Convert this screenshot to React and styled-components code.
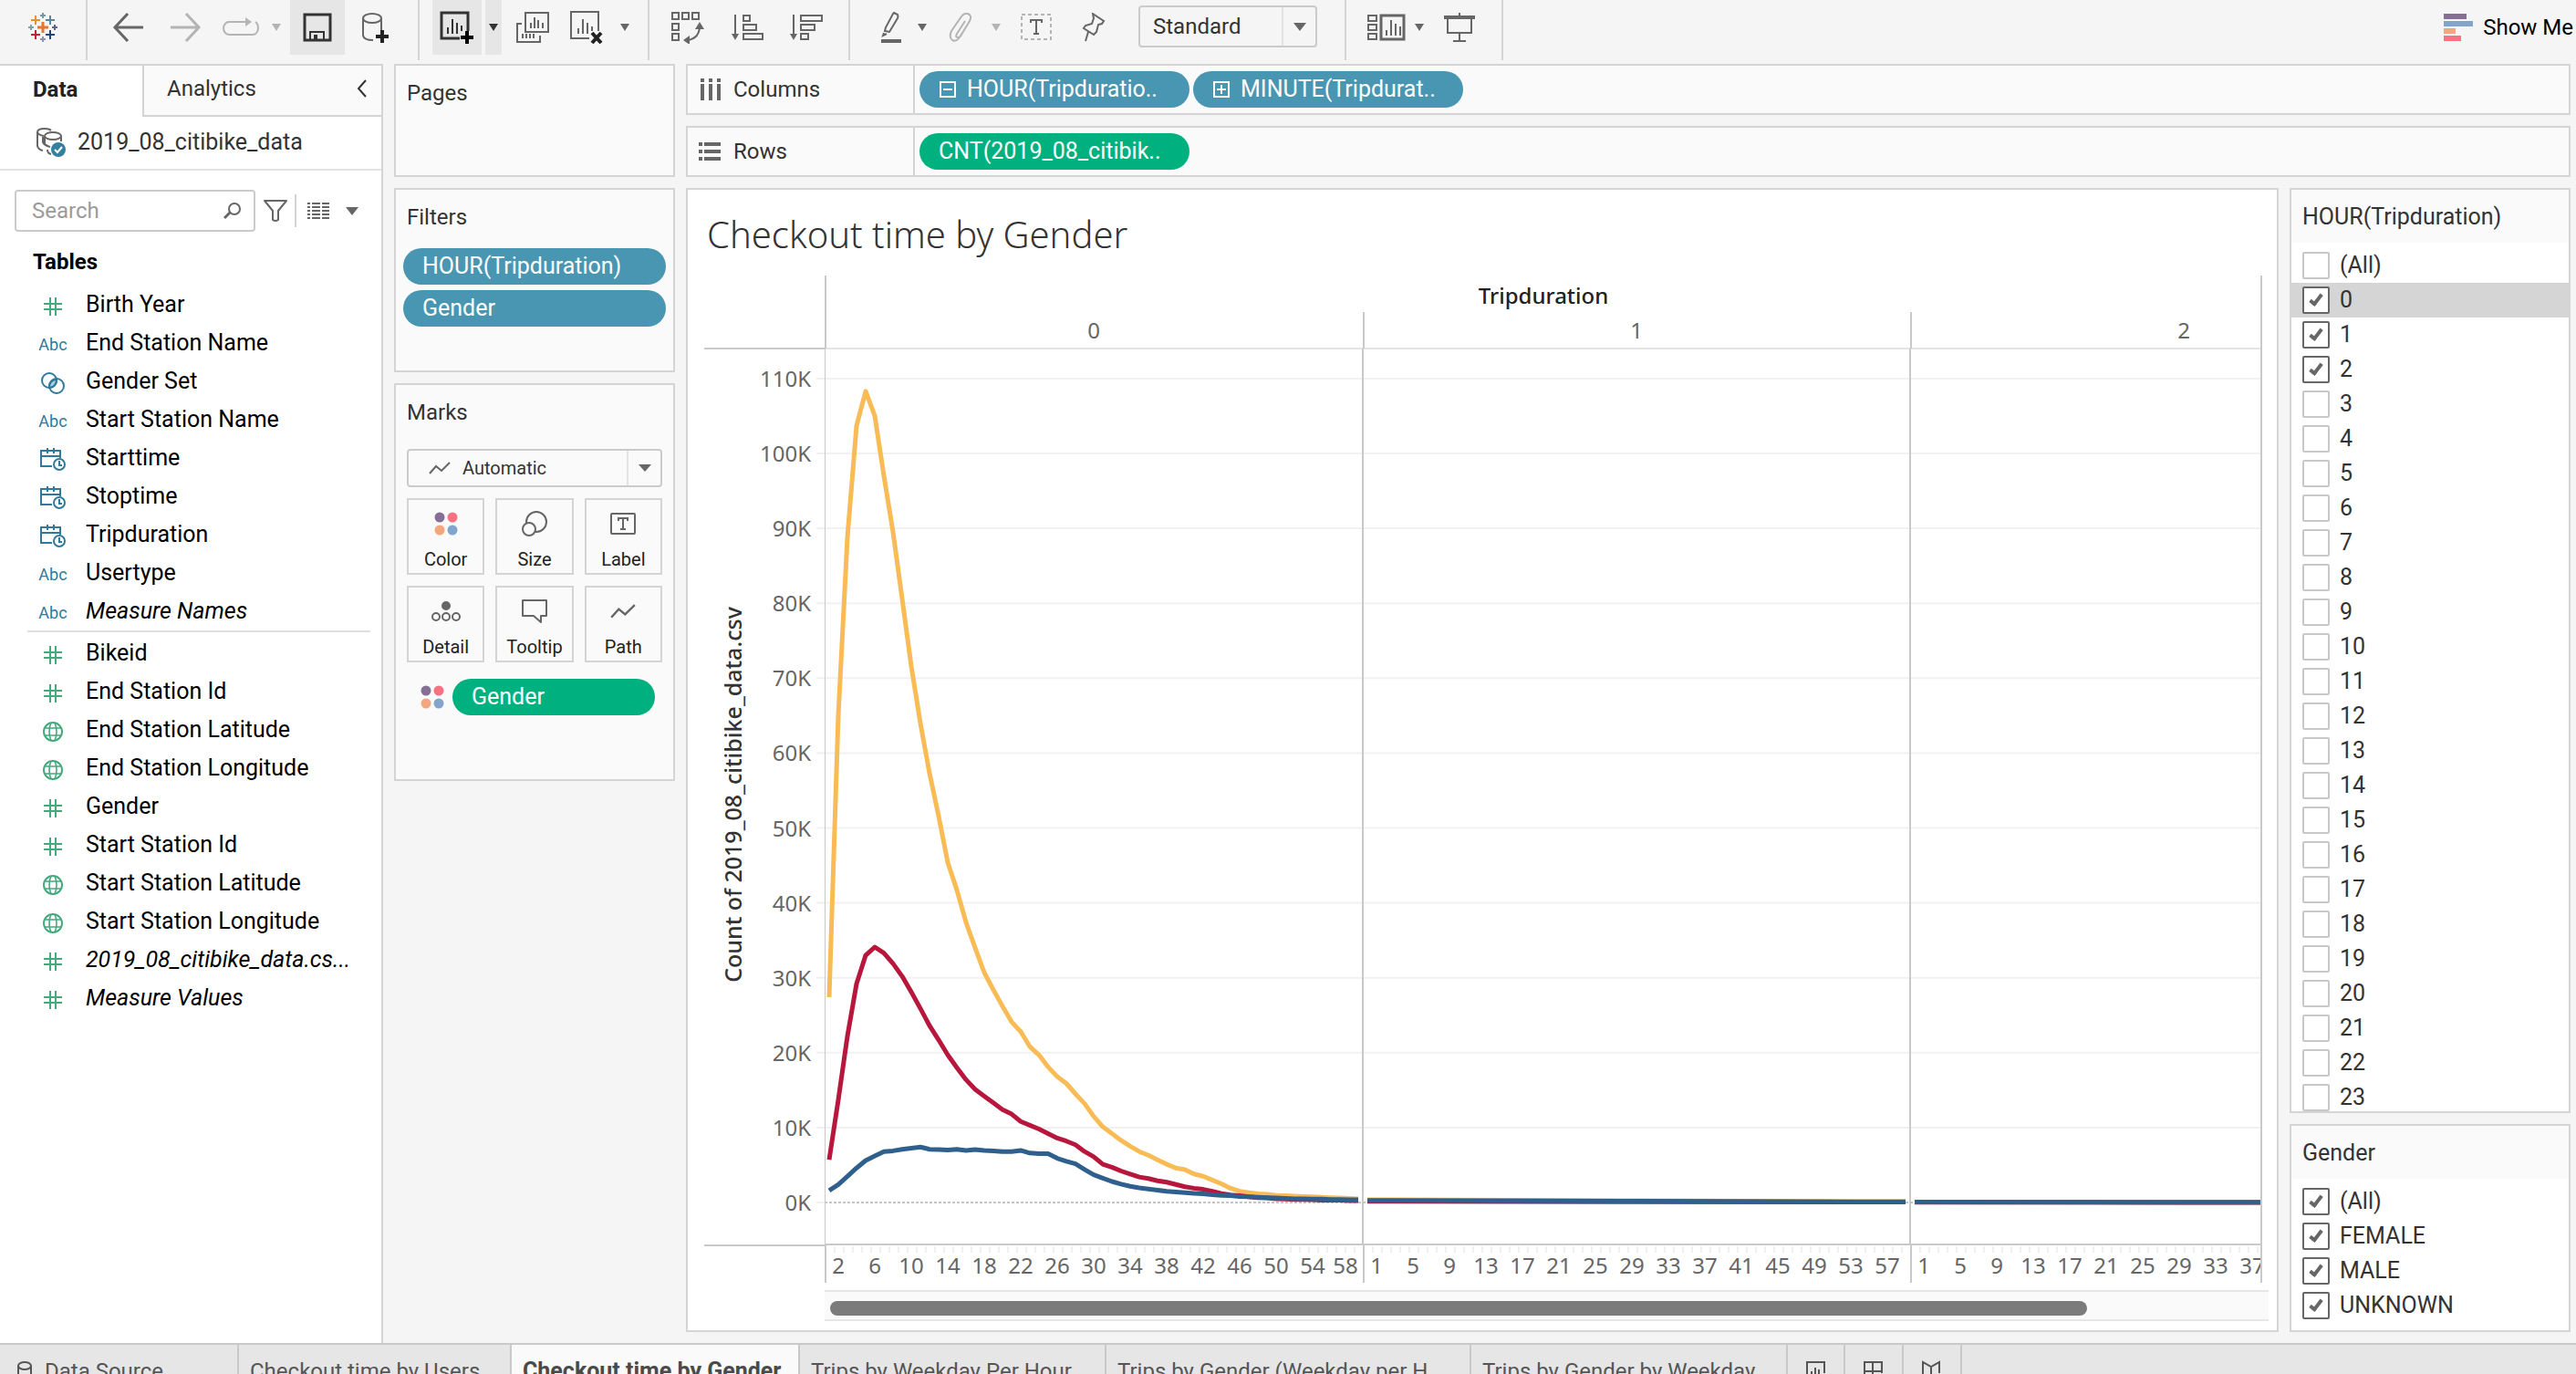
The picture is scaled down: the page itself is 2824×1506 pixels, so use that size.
import React, { useState } from "react";
import styled, { createGlobalStyle, css } from "styled-components";

const UI = `Roboto, "Liberation Sans", sans-serif`;
const CHART = `"Noto Sans", "Open Sans", sans-serif`;
const LINE = "#d4d4d4";
const INK = "#333333";
const GREY = "#666666";
const FAINT = "#b4b4b4";
const BLUE = "#4996b2";
const GREEN = "#00b180";

const GlobalStyle = createGlobalStyle`
  *, *::before, *::after { box-sizing: border-box; }
  body { margin: 0; background: #f5f5f5; }
  button, input, select { font: inherit; color: inherit; }
  button { padding: 0; border: 0; background: none; cursor: pointer; }
  svg { display: block; flex: none; }
`;

const Window = styled.div`
  display: flex;
  flex-direction: column;
  height: 100vh;
  overflow: hidden;
  background: #f5f5f5;
  color: ${INK};
  font: 24px/32px ${UI};
`;

/* ---------- Toolbar ---------- */

const Toolbar = styled.header`
  display: flex;
  flex: none;
  height: 70px;
  padding-bottom: 4px;
`;

const ToolGroup = styled.div`
  display: flex;
  flex: none;
  align-items: flex-start;
  padding: 0 ${(p) => p.$right || 0}px 0 ${(p) => p.$left || 0}px;
  border-right: 2px solid ${LINE};
`;

const ToolButton = styled.button`
  display: flex;
  align-items: center;
  justify-content: center;
  width: ${(p) => p.$w}px;
  height: 60px;
  background: ${(p) => (p.$on ? "#e6e6e6" : "transparent")};
  color: ${(p) => (p.$tone === "dark" ? INK : p.$tone === "faint" ? FAINT : GREY)};
`;

const SplitGap = styled.span`
  width: 4px;
`;

const SelectBox = styled.div`
  display: flex;
  align-items: stretch;
  width: ${(p) => p.$w || "auto"};
  height: ${(p) => p.$h}px;
  margin: ${(p) => p.$m || "0"};
  border: 2px solid #cbcbcb;
  border-radius: 4px;
  font-size: ${(p) => p.$size || 24}px;
  color: ${INK};
`;

const NativeSelect = styled.select`
  flex: 1;
  min-width: 0;
  padding: 0 0 0 ${(p) => p.$pad}px;
  border: 0;
  appearance: none;
  background: transparent;
  outline: none;
`;

const SelectIcon = styled.span`
  display: flex;
  align-items: center;
  padding-left: 22px;
  color: ${GREY};
`;

const SelectArrow = styled.span`
  display: flex;
  align-items: center;
  justify-content: center;
  width: 37px;
  border-left: 2px solid #e2e2e2;
  color: ${GREY};
`;

const ShowMe = styled.button`
  display: flex;
  align-items: center;
  gap: 11px;
  height: 60px;
  margin-left: auto;
  padding-right: 3px;
  color: #000;
  white-space: nowrap;
`;

/* ---------- Workspace ---------- */

const Workspace = styled.main`
  display: flex;
  flex: 1;
  min-height: 0;
`;

const DataPane = styled.aside`
  display: flex;
  flex: none;
  flex-direction: column;
  width: 420px;
  border-top: 2px solid ${LINE};
  border-right: 2px solid ${LINE};
  background: #fff;
`;

const PaneTabs = styled.div`
  display: flex;
  height: 56px;
`;

const PaneTab = styled.button`
  width: ${(p) => (p.$active ? "156px" : "auto")};
  flex: ${(p) => (p.$active ? "none" : 1)};
  display: flex;
  align-items: center;
  justify-content: space-between;
  padding: 0 15px 4px ${(p) => (p.$active ? 36 : 25)}px;
  font-weight: ${(p) => (p.$active ? 700 : 400)};
  color: ${(p) => (p.$active ? "#222" : INK)};
  ${(p) =>
    !p.$active &&
    css`
      background: #fafafa;
      border-left: 2px solid ${LINE};
      border-bottom: 2px solid ${LINE};
    `}
`;

const SourceRow = styled.button`
  display: flex;
  align-items: center;
  gap: 13px;
  height: 59px;
  padding: 0 0 2px 40px;
  border-bottom: 2px solid #e2e2e2;
  font-size: 25px;
  svg {
    color: ${GREY};
  }
`;

const SearchRow = styled.div`
  display: flex;
  align-items: center;
  margin: 21px 0 0 16px;
  color: ${GREY};
`;

const SearchField = styled.label`
  display: flex;
  align-items: center;
  width: 264px;
  height: 46px;
  padding: 0 13px 0 17px;
  border: 2px solid #cbcbcb;
  border-radius: 4px;
`;

const SearchInput = styled.input`
  flex: 1;
  min-width: 0;
  padding: 0;
  border: 0;
  outline: none;
  background: transparent;
  &::placeholder {
    color: #9b9b9b;
    opacity: 1;
  }
`;

const PlainIcon = styled.button`
  display: flex;
  align-items: center;
  justify-content: center;
  width: ${(p) => p.$w}px;
  height: 36px;
  color: ${GREY};
  border-left: ${(p) => (p.$rule ? `2px solid ${LINE}` : "0")};
`;

const TablesTitle = styled.h2`
  margin: 17px 0 10px 36px;
  font-size: 24px;
  font-weight: 700;
  line-height: 32px;
  color: #000;
`;

const FieldList = styled.ul`
  margin: 0;
  padding: 0;
  list-style: none;
  & + & {
    margin: 0 12px 0 30px;
    padding-top: 2px;
    border-top: 2px solid #dedede;
  }
  & + & > li {
    padding-left: 6px;
  }
`;

const Field = styled.li`
  display: flex;
  align-items: center;
  height: 42px;
  padding-left: 36px;
  font-size: 25px;
  font-style: ${(p) => (p.$calc ? "italic" : "normal")};
  color: #000;
  white-space: nowrap;
`;

const FieldIcon = styled.span`
  display: flex;
  justify-content: center;
  width: 44px;
  margin-right: 14px;
  padding-top: 3px;
  font-size: 18px;
  font-style: normal;
  line-height: 24px;
  color: #2f7a9c;
`;

/* ---------- Cards ---------- */

const CardColumn = styled.section`
  display: flex;
  flex: none;
  flex-direction: column;
  gap: 12px;
  width: 308px;
  margin: 0 12px;
`;

const Card = styled.div`
  min-height: ${(p) => p.$min}px;
  padding-bottom: 44px;
  border: 2px solid ${LINE};
  background: #fafafa;
`;

const CardTitle = styled.h3`
  margin: 0;
  padding: 14px 0 18px 12px;
  font-size: 24px;
  font-weight: 400;
  line-height: 32px;
`;

const PillStack = styled.div`
  display: flex;
  flex-direction: column;
  gap: 6px;
  padding: 0 8px;
`;

const Pill = styled.button`
  display: flex;
  flex: ${(p) => (p.$w ? "none" : 1)};
  align-items: center;
  gap: 11px;
  width: ${(p) => (p.$w ? `${p.$w}px` : "auto")};
  min-height: 40px;
  padding-left: 21px;
  border-radius: 20px;
  background: ${(p) => (p.$green ? GREEN : BLUE)};
  color: #fff;
  font-size: 25px;
  line-height: 32px;
  text-align: left;
  white-space: nowrap;
`;

const MarkGrid = styled.div`
  display: grid;
  grid-template-columns: repeat(3, 1fr);
  gap: 12px;
  padding: 12px;
`;

const MarkButton = styled.button`
  display: flex;
  flex-direction: column;
  align-items: center;
  justify-content: space-between;
  height: 84px;
  padding: 8px 0 3px;
  border: 2px solid ${LINE};
  font-size: 20px;
  line-height: 24px;
  color: #222;
`;

const MarkGlyph = styled.span`
  display: flex;
  align-items: center;
  height: 36px;
  color: ${GREY};
`;

const MarkRow = styled.div`
  display: flex;
  align-items: center;
  gap: 9px;
  padding: 6px 20px 0 27px;
`;

/* ---------- Shelves ---------- */

const Sheet = styled.section`
  display: flex;
  flex: 1;
  flex-direction: column;
  gap: 12px;
  min-width: 0;
  margin: 0 6px 12px 0;
`;

const Shelf = styled.div`
  display: flex;
  flex: none;
  height: 56px;
  border: 2px solid ${LINE};
  background: #fafafa;
`;

const ShelfName = styled.div`
  display: flex;
  align-items: center;
  gap: 14px;
  width: 249px;
  padding-left: ${(p) => p.$pad}px;
  border-right: 2px solid ${LINE};
  svg {
    color: ${GREY};
  }
`;

const ShelfPills = styled.div`
  display: flex;
  align-items: center;
  gap: 4px;
  padding-left: 5px;
`;

const ViewRow = styled.div`
  display: flex;
  flex: 1;
  gap: 12px;
  min-height: 0;
`;

/* ---------- Viz ---------- */

const View = styled.article`
  display: flex;
  flex: 1;
  flex-direction: column;
  min-width: 0;
  padding: 0 9px 0 18px;
  border: 2px solid ${LINE};
  background: #fff;
  overflow: hidden;
`;

const ViewTitle = styled.h1`
  margin: 0;
  padding: 21px 0 17px 3px;
  font: 300 40px/56px ${CHART};
  color: ${INK};
`;

const Chart = styled.div`
  display: flex;
  padding-right: 7px;
`;

const ChartSvg = styled.svg`
  width: ${(p) => p.$w || "auto"};
  flex: ${(p) => (p.$w ? "none" : "1 1 0")};
  min-width: 0;
  height: 1104px;
  font-family: ${CHART};
  font-size: 24px;
  overflow: hidden;
`;

const ScrollTrack = styled.div`
  display: flex;
  align-items: flex-end;
  height: 34px;
  margin: 8px 0 0 132px;
  padding: 0 6px 4px;
  border-top: 2px solid #e6e6e6;
  border-bottom: 2px solid #e6e6e6;
  background: #fafafa;
`;

const ScrollThumb = styled.div`
  width: ${(p) => p.$share}%;
  height: 16px;
  border-radius: 8px;
  background: #7b7b7b;
`;

/* ---------- Filter cards ---------- */

const FilterColumn = styled.div`
  display: flex;
  flex: none;
  flex-direction: column;
  gap: 12px;
  width: 308px;
`;

const FilterCard = styled.fieldset`
  flex: ${(p) => (p.$fill ? "1 1 0" : "none")};
  min-height: 0;
  min-width: 0;
  margin: 0;
  padding: 0 0 ${(p) => (p.$fill ? 0 : 8)}px;
  border: 2px solid ${LINE};
  background: #fff;
  font-size: 25px;
  overflow: hidden;
`;

const FilterTitle = styled.div`
  height: 58px;
  margin-bottom: 6px;
  padding: 14px 0 0 12px;
  background: #fafafa;
  line-height: 32px;
`;

const FilterItem = styled.label`
  display: flex;
  align-items: center;
  gap: 11px;
  height: 38px;
  padding-left: 12px;
  background: ${(p) => (p.$selected ? "#d5d5d5" : "transparent")};
`;

const Tick = styled.input`
  appearance: none;
  width: 30px;
  height: 30px;
  margin: 0;
  border: 2px solid #c8c8c8;
  border-radius: 2px;
  background: #fff;
  display: grid;
  place-items: center;
  &:checked {
    border-color: ${GREY};
  }
  &:checked::after {
    content: "";
    width: 8px;
    height: 15px;
    margin-bottom: 4px;
    border: solid ${GREY};
    border-width: 0 4px 4px 0;
    transform: rotate(38deg);
  }
`;

/* ---------- Sheet tabs ---------- */

const TabStrip = styled.nav`
  display: flex;
  flex: none;
  align-items: flex-start;
  height: 34px;
  border-top: 2px solid #c9c9c9;
  background: #e6e6e6;
  overflow: hidden;
`;

const SheetTab = styled.button`
  display: flex;
  flex: none;
  align-items: center;
  justify-content: ${(p) => (p.$icon ? "center" : "flex-start")};
  gap: 14px;
  width: ${(p) => p.$w}px;
  height: 58px;
  padding-left: ${(p) => (p.$icon ? 0 : p.$first ? 19 : 12)}px;
  border-right: 2px solid #c9c9c9;
  background: ${(p) => (p.$active ? "#fafafa" : "transparent")};
  font-size: ${(p) => (p.$active ? 25 : 24)}px;
  font-weight: ${(p) => (p.$active ? 700 : 400)};
  color: ${(p) => (p.$active ? "#4a4a4a" : "#555")};
  white-space: nowrap;
`;

/* ---------- Icons ---------- */

const Svg = ({ w, h, sw = 2, children }) => (
  <svg width={w} height={h} viewBox={`0 0 ${w} ${h}`} fill="none" stroke="currentColor" strokeWidth={sw} aria-hidden="true">
    {children}
  </svg>
);

const Caret = ({ w = 12, h = 8 }) => (
  <svg width={w} height={h} viewBox="0 0 12 8" preserveAspectRatio="none" fill="currentColor" aria-hidden="true">
    <path d="M0 0H12L6 8Z" />
  </svg>
);

const LogoIcon = () => {
  const crosses = [
    [16, 16, 6, 3, "#e8762c"],
    [8, 8, 5, 2, "#eb912c"],
    [24, 8, 5, 2, "#59879b"],
    [8, 24, 5, 2, "#c72035"],
    [24, 24, 5, 2, "#1f447e"],
    [16, 3, 3, 2, "#7199a6"],
    [16, 29, 3, 2, "#8b93b5"],
    [3, 16, 3, 2, "#7ba3a9"],
    [29, 16, 3, 2, "#5b6591"],
  ];
  return (
    <Svg w={32} h={32}>
      {crosses.map(([x, y, r, s, c]) => (
        <path key={`${x}-${y}`} d={`M${x - r} ${y}H${x + r}M${x} ${y - r}V${y + r}`} stroke={c} strokeWidth={s} />
      ))}
    </Svg>
  );
};

const BackIcon = () => (
  <Svg w={34} h={32} sw={3}><path d="M17 1L3 16L17 31M2 16H34" /></Svg>
);
const ForwardIcon = () => (
  <Svg w={34} h={32} sw={3}><path d="M17 1L31 16L17 31M32 16H0" /></Svg>
);
const LoopIcon = () => (
  <Svg w={42} h={24}>
    <path d="M27 6H8A6 7 0 0 0 2 13A6 7 0 0 0 8 20H33A6 7 0 0 0 40 13Q40 8 37 6" />
    <path d="M26 1L33 6L26 11Z" fill="currentColor" stroke="none" />
  </Svg>
);
const SaveIcon = () => (
  <Svg w={32} h={32}>
    <path d="M2 2H30V30H2Z" strokeWidth="3" /><path d="M8 30V21H23V30" /><path d="M14 24V30" strokeWidth="4" />
  </Svg>
);
const DbPlusIcon = () => (
  <Svg w={30} h={34}>
    <ellipse cx="11" cy="7" rx="10" ry="5" /><path d="M1 7V26Q2 31 12 31M21 7V20" />
    <path d="M22 20V34M15 27H29" stroke="#222" strokeWidth="4" />
  </Svg>
);
const NewSheetIcon = () => (
  <Svg w={38} h={36} sw={3}>
    <path d="M22 30H2V2H31V22" /><path d="M9 25V18M14 25V9M19 25V13M24 22V16" strokeWidth="2" />
    <path d="M30 22V36M23 29H37" stroke="#000" strokeWidth="4" />
  </Svg>
);
const DuplicateIcon = () => (
  <Svg w={36} h={34}>
    <path d="M10 1H35V22H10Z M6 13H1V33H26V26" /><path d="M16 18V12M20 18V6M24 18V9M29 18V12M7 29V24M11 29V24M15 29V24M19 29V24" />
  </Svg>
);
const ClearIcon = () => (
  <Svg w={38} h={36}>
    <path d="M21 30H1V1H31V22" /><path d="M9 25V19M14 25V9M19 25V13M24 22V17" />
    <path d="M24 24L34 35M34 24L24 35" stroke="#222" strokeWidth="4" />
  </Svg>
);
const SwapIcon = () => (
  <Svg w={36} h={36}>
    <path d="M1 2H8V9H1ZM12 2H19V9H12ZM23 2H30V9H23ZM1 14H8V21H1ZM1 25H8V32H1Z" />
    <path d="M31 16Q31 30 18 32" />
    <path d="M31 12L36 20H26ZM13 32L20 27V37Z" fill="currentColor" stroke="none" />
  </Svg>
);
const SortAscIcon = () => (
  <Svg w={36} h={30}>
    <path d="M4 1V26M13 2H20V8H13ZM13 12H27V18H13ZM13 22H34V28H13Z" />
    <path d="M0 22H8L4 29Z" fill="currentColor" stroke="none" />
  </Svg>
);
const SortDescIcon = () => (
  <Svg w={36} h={30}>
    <path d="M4 1V26M12 2H35V8H12ZM12 12H27V18H12ZM12 22H20V28H12Z" />
    <path d="M0 22H8L4 29Z" fill="currentColor" stroke="none" />
  </Svg>
);
const PenIcon = () => (
  <Svg w={24} h={36}>
    <path d="M14 2L18 4Q19 6 18 8L9 23L4 22L5 18L13 3Z" transform="translate(1 0)" />
    <path d="M4 24L3 27L7 25" /><path d="M1 33H23" strokeWidth="4" />
  </Svg>
);
const ClipIcon = () => (
  <Svg w={26} h={32}>
    <path d="M18 9L9 23Q7 27 10 27Q12 28 14 24L23 9Q26 3 21 1Q17 0 14 4L3 20Q0 27 4 30Q8 32 11 28L17 19" />
  </Svg>
);
const TextBoxIcon = () => (
  <Svg w={36} h={32}>
    <rect x="2" y="2" width="32" height="27" strokeDasharray="4 3" stroke={FAINT} />
    <path d="M12 11V8H24V11M18 8V23M15 23H21" stroke={GREY} />
  </Svg>
);
const PinIcon = () => (
  <Svg w={26} h={32}>
    <path d="M12 1L24 9L22 12L18 13L16 21L13 24L2 17L4 14L11 12L13 6ZM7 21L4 31" />
  </Svg>
);
const CardsIcon = () => (
  <Svg w={42} h={30}>
    <path d="M1 2H10V8H1ZM1 12H10V18H1ZM1 22H10V28H1Z" /><path d="M15 2H40V28H15Z" strokeWidth="3" />
    <path d="M21 24V18M26 24V7M31 24V11M36 24V14" />
  </Svg>
);
const PresentIcon = () => (
  <Svg w={36} h={34}>
    <path d="M1 6H35" strokeWidth="4" /><path d="M5 6V23H31V6M18 1V4M18 23V32M11 32H25" />
  </Svg>
);
const ShowMeIcon = () => (
  <svg width="32" height="30" aria-hidden="true">
    <path d="M0 0H25V6H0Z" fill="#866f97" /><path d="M0 8H32V14H0Z" fill="#83a5cb" />
    <path d="M0 16H13V22H0Z" fill="#f4a77c" /><path d="M0 24H19V30H0Z" fill="#fb7181" />
  </svg>
);
const ChevronIcon = () => (
  <Svg w={12} h={20}><path d="M10 1L2 10L10 19" /></Svg>
);
const SourceIcon = () => (
  <Svg w={32} h={32}>
    <path d="M1 5Q1 1 9 1Q14 1 16 3M1 5V20Q2 24 7 25M1 5Q2 8 8 9M7 10V16Q8 19 13 20" />
    <ellipse cx="18" cy="9" rx="9" ry="4" /><path d="M9 9V17M27 9V15M9 17Q10 20 15 21M12 24Q12 28 16 29" />
    <circle cx="24" cy="24" r="8" fill="#33809f" stroke="none" /><path d="M20 24L23 27L28 21" stroke="#fff" />
  </Svg>
);
const SearchIcon = () => (
  <Svg w={20} h={20}><circle cx="12" cy="8" r="6" /><path d="M7 12L1 18" strokeWidth="3" /></Svg>
);
const FunnelIcon = () => (
  <Svg w={26} h={26}><path d="M1 2H25L16 13V23Q13 25 10 23V13Z" strokeLinejoin="round" /></Svg>
);
const ListIcon = () => (
  <Svg w={24} h={20}>
    {[1, 5, 9, 13, 17].map((y) => (
      <path key={y} d={`M0 ${y + 1}H3M5 ${y + 1}H14M16 ${y + 1}H24`} />
    ))}
  </Svg>
);
const HashIcon = () => (
  <Svg w={20} h={20}><path d="M7 0V20M13 0V20M0 7H20M0 13H20" stroke="#45a97e" /></Svg>
);
const GlobeIcon = () => (
  <Svg w={22} h={22}>
    <g stroke="#45a97e">
      <circle cx="11" cy="11" r="10" /><path d="M9 1Q5 11 9 21M13 1Q17 11 13 21M2 7H20M2 15H20" strokeWidth="1.6" />
    </g>
  </Svg>
);
const SetIcon = () => (
  <Svg w={26} h={24}>
    <circle cx="9" cy="9" r="8" /><circle cx="17" cy="15" r="8" />
    <path d="M17 8A8 8 0 0 1 9 17A8 8 0 0 1 17 8Z" fill="#2f7a9c" fillOpacity="0.4" />
  </Svg>
);
const DateTimeIcon = () => (
  <Svg w={28} h={26}>
    <path d="M13 20H1V3H22V11M1 9H22M8 0V6M15 0V6" /><circle cx="21" cy="18" r="6" /><path d="M21 14V19H24" />
  </Svg>
);
const ColumnsIcon = () => (
  <Svg w={22} h={24}>
    <path d="M2 0V24M11 0V24M20 0V24" strokeWidth="4" strokeDasharray="4 2 18" />
  </Svg>
);
const RowsIcon = () => (
  <Svg w={24} h={20}>
    <path d="M0 2H24M0 10H24M0 18H24" strokeWidth="4" strokeDasharray="4 2 18" />
  </Svg>
);
const ExpandIcon = ({ plus }) => (
  <Svg w={20} h={20}>
    <path d="M2 2H18V18H2Z" /><path d={plus ? "M5 10H15M10 5V15" : "M5 10H15"} />
  </Svg>
);
const LineIcon = ({ w = 24, h = 14 }) => (
  <svg width={w} height={h} viewBox="0 0 24 14" preserveAspectRatio="none" fill="none" stroke="currentColor" strokeWidth="2" aria-hidden="true">
    <path d="M1 13L8 5L14 10L23 1" />
  </svg>
);
const ColorIcon = () => (
  <svg width="26" height="26" aria-hidden="true">
    <circle cx="6" cy="6" r="5.5" fill="#866f97" /><circle cx="20" cy="6" r="5.5" fill="#fb7181" />
    <circle cx="6" cy="20" r="5.5" fill="#f4a77c" /><circle cx="20" cy="20" r="5.5" fill="#83a5cb" />
  </svg>
);
const SizeIcon = () => (
  <Svg w={28} h={28}><circle cx="16" cy="12" r="11" /><circle cx="8" cy="20" r="7" fill="#fafafa" /></Svg>
);
const LabelIcon = () => (
  <Svg w={28} h={24}><rect x="1" y="1" width="26" height="22" rx="1" /><path d="M9 9V6H19V9M14 6V18M11 18H17" /></Svg>
);
const DetailIcon = () => (
  <Svg w={32} h={22}>
    <circle cx="16" cy="5" r="4" fill="currentColor" /><circle cx="5" cy="17" r="4" /><circle cx="16" cy="17" r="4" /><circle cx="27" cy="17" r="4" />
  </Svg>
);
const TooltipIcon = () => (
  <Svg w={28} h={26}><path d="M1 1H27V18H21V25L13 18H1Z" strokeLinejoin="round" /></Svg>
);
const TabSourceIcon = () => (
  <Svg w={16} h={24}><ellipse cx="8" cy="6" rx="7" ry="4" /><path d="M1 6V20Q8 25 15 20V6" /></Svg>
);
const TabSheetIcon = () => (
  <Svg w={24} h={24}><path d="M15 23H2V2H21V14M7 18V12M11 18V8M15 18V10M20 15V24M15 20H24" /></Svg>
);
const TabDashIcon = () => (
  <Svg w={24} h={24}><path d="M14 22H2V2H21V14M2 12H21M11 2V22M20 15V24M15 20H24" /></Svg>
);
const TabStoryIcon = () => (
  <Svg w={24} h={24}><path d="M14 22H2V2L11 7L20 2V14M11 7V22M20 15V24M15 20H24" /></Svg>
);

/* ---------- Data ---------- */

const DIMENSIONS = [
  ["Birth Year", "hash"], ["End Station Name", "abc"], ["Gender Set", "set"], ["Start Station Name", "abc"],
  ["Starttime", "date"], ["Stoptime", "date"], ["Tripduration", "date"], ["Usertype", "abc"],
  ["Measure Names", "abc", true],
];
const MEASURES = [
  ["Bikeid", "hash"], ["End Station Id", "hash"], ["End Station Latitude", "globe"], ["End Station Longitude", "globe"],
  ["Gender", "hash"], ["Start Station Id", "hash"], ["Start Station Latitude", "globe"], ["Start Station Longitude", "globe"],
  ["2019_08_citibike_data.cs...", "hash", true], ["Measure Values", "hash", true],
];
const FIELD_ICONS = { hash: <HashIcon />, abc: "Abc", set: <SetIcon />, date: <DateTimeIcon />, globe: <GlobeIcon /> };

const MARKS = [
  ["Color", <ColorIcon />], ["Size", <SizeIcon />], ["Label", <LabelIcon />],
  ["Detail", <DetailIcon />], ["Tooltip", <TooltipIcon />], ["Path", <LineIcon w={28} h={16} />],
];

const HOURS = ["(All)", ...Array.from({ length: 24 }, (_, i) => String(i))];
const GENDERS = ["(All)", "FEMALE", "MALE", "UNKNOWN"];

const SHEETS = [
  ["Checkout time by Users", 299], ["Checkout time by Gender", 316], ["Trips by Weekday Per Hour", 336],
  ["Trips by Gender (Weekday per H..", 400], ["Trips by Gender by Weekday", 347],
];

/* Trips per minute of the first hour, in thousands, from minute 1. */
const SERIES = [
  {
    color: "#f8bb56",
    tail: 0.38,
    values: [27.4, 65, 88.8, 103.7, 108.3, 105, 97, 89.5, 80.6, 71.6, 64, 57.3, 51.6, 45.4, 41.7, 37.4, 34, 30.7, 28.4, 26.2, 24.1, 22.8, 20.8, 19.7, 18.1, 16.8, 15.9, 14.5, 13.2, 11.5, 10.1, 9.2, 8.3, 7.5, 6.8, 6.3, 5.7, 5.1, 4.6, 4.4, 3.8, 3.5, 3, 2.5, 1.9, 1.5, 1.3, 1.15, 1.1, 0.95, 0.9, 0.85, 0.8, 0.75, 0.7, 0.65, 0.6, 0.55, 0.5],
  },
  {
    color: "#b8173d",
    tail: 0.15,
    values: [5.7, 13.7, 22.2, 29.2, 33, 34.1, 33.3, 31.9, 30.2, 28.1, 25.9, 23.6, 21.7, 19.7, 18, 16.4, 15.1, 14.2, 13.3, 12.4, 11.8, 10.8, 10.3, 9.8, 9.2, 8.6, 8.2, 7.7, 6.8, 6.1, 5.1, 4.7, 4.2, 3.8, 3.4, 3.2, 2.9, 2.7, 2.4, 2.1, 1.9, 1.75, 1.5, 1.2, 1, 0.9, 0.75, 0.65, 0.6, 0.5, 0.45, 0.4, 0.4, 0.35, 0.3, 0.3, 0.3, 0.25, 0.25],
  },
  {
    color: "#2f608d",
    tail: 0.28,
    values: [1.6, 2.4, 3.5, 4.6, 5.6, 6.2, 6.8, 6.9, 7.1, 7.25, 7.4, 7.1, 7.05, 7, 7.1, 6.95, 7.05, 6.95, 6.9, 6.8, 6.8, 6.95, 6.6, 6.5, 6.5, 5.9, 5.5, 5.15, 4.4, 3.7, 3.25, 2.8, 2.45, 2.15, 1.95, 1.8, 1.65, 1.5, 1.4, 1.3, 1.2, 1.15, 1.05, 0.95, 0.9, 0.8, 0.75, 0.7, 0.65, 0.6, 0.55, 0.5, 0.5, 0.45, 0.45, 0.4, 0.4, 0.35, 0.35],
  },
];

/* Plot geometry: one minute is ten pixels wide. */
const ZERO = 1016;
const K = 8.21;
const HEAD = 80;
const FLOOR = 1062;
const PANES = [
  { start: 1, origin: -5, ticks: 58, label: 2, labels: 15, name: "0", mid: 295, top: 0 },
  { start: 591, origin: 595, ticks: 59, label: 1, labels: 15, name: "1", mid: 890, top: 40, fade: [1, 0.6, 0.3] },
  { start: 1191, origin: 1195, ticks: 38, label: 1, labels: 10, name: "2", mid: 1490, top: 40, fade: [0.2, 0.1, 0] },
];
const THOUSANDS = Array.from({ length: 12 }, (_, i) => i * 10);
const yOf = (v) => ZERO - v * K;
const linePath = (points) => points.map(([x, y], i) => `${i ? "L" : "M"}${x} ${y.toFixed(1)}`).join("");

function YAxis() {
  return (
    <ChartSvg $w="132px" aria-label="Count of trips axis">
      <path d={`M0 ${HEAD}H132M0 ${FLOOR + 1}H132`} stroke="#c9c9c9" strokeWidth="2" />
      <text transform="translate(41 569) rotate(-90)" textAnchor="middle" fontSize="25" fontWeight="500" fill={INK}>
        Count of 2019_08_citibike_data.csv
      </text>
      {THOUSANDS.map((v) => (
        <g key={v}>
          <path d={`M123 ${yOf(v)}H132`} stroke="#f0f0f0" strokeWidth="2" />
          <text x="117" y={yOf(v) + 9} textAnchor="end" fill={GREY}>{v}K</text>
        </g>
      ))}
    </ChartSvg>
  );
}

function Plot() {
  return (
    <ChartSvg role="img" aria-label="Checkout time by Gender">
      <text x="50%" y="31" textAnchor="middle" fontWeight="500" fill="#222">Tripduration</text>
      {THOUSANDS.slice(1).map((v) => (
        <path key={v} d={`M0 ${yOf(v)}H4000`} stroke="#f1f1f1" strokeWidth="2" />
      ))}
      <path d={`M0 ${ZERO}H4000`} stroke="#c4c4c4" strokeWidth="2" strokeDasharray="3 2" />
      <path d={`M0 ${HEAD}H4000`} stroke="#c9c9c9" />
      <path d={`M0 ${FLOOR}H4000`} stroke="#c9c9c9" strokeWidth="2" />
      {PANES.map((p, i) => (
        <g key={p.name}>
          <path d={`M${p.start} ${p.top}V${HEAD}M${p.start} ${FLOOR + 1}V1104`} stroke="#c9c9c9" strokeWidth="2" />
          <path d={`M${i ? p.start - 1 : 0.5} ${HEAD}V${FLOOR}`} stroke="#c9c9c9" strokeWidth={i ? 2 : 1} />
          <text x={p.mid} y="69" textAnchor="middle" fill={GREY}>{p.name}</text>
          {Array.from({ length: p.ticks }, (_, n) => (
            <path key={n} d={`M${p.start + 10 * (n + 1)} ${FLOOR + 2}v7`} stroke="#f0f0f0" strokeWidth="2" />
          ))}
          {Array.from({ length: p.labels }, (_, n) => {
            const minute = p.label + 4 * n;
            const x = p.origin + 10 * minute - (minute === 58 ? 4 : 0);
            return <text key={n} x={x} y="1094" textAnchor="middle" fill={GREY}>{minute}</text>;
          })}
        </g>
      ))}
      <g fill="none" strokeWidth="5" strokeLinejoin="round">
        {SERIES.map((s) => (
          <g key={s.color} stroke={s.color}>
            <path d={linePath(s.values.map((v, n) => [5 + 10 * n, yOf(v)]))} />
            {PANES.slice(1).map((p) => (
              <path key={p.name} d={linePath(p.fade.map((f, n) => [p.origin + 295 * n, yOf(s.tail * f)]))} />
            ))}
          </g>
        ))}
      </g>
      <line x1="100%" x2="100%" y1="0" y2="1104" stroke="#c9c9c9" strokeWidth="4" />
    </ChartSvg>
  );
}

function Fields({ items }) {
  return (
    <FieldList>
      {items.map(([name, kind, calc]) => (
        <Field key={name} $calc={calc}>
          <FieldIcon>{FIELD_ICONS[kind]}</FieldIcon>
          {name}
        </Field>
      ))}
    </FieldList>
  );
}

function Filter({ title, items, initial, selected, fill }) {
  const [checked, setChecked] = useState(() => new Set(initial));
  const toggle = (item) =>
    setChecked((old) => {
      const next = new Set(old);
      if (!next.delete(item)) next.add(item);
      return next;
    });
  return (
    <FilterCard $fill={fill} aria-label={title}>
      <FilterTitle>{title}</FilterTitle>
      {items.map((item) => (
        <FilterItem key={item} $selected={item === selected}>
          <Tick type="checkbox" checked={checked.has(item)} onChange={() => toggle(item)} />
          {item}
        </FilterItem>
      ))}
    </FilterCard>
  );
}

function Tool({ label, children, ...rest }) {
  return <ToolButton type="button" aria-label={label} {...rest}>{children}</ToolButton>;
}

export default function App() {
  return (
    <Window>
      <GlobalStyle />
      <Toolbar>
        <ToolGroup>
          <Tool label="Start page" $w={94}><LogoIcon /></Tool>
        </ToolGroup>
        <ToolGroup $left={16} $right={12}>
          <Tool label="Undo" $w={56}><BackIcon /></Tool>
          <Tool label="Redo" $w={72} $tone="faint"><ForwardIcon /></Tool>
          <Tool label="Replay" $w={48} $tone="faint"><LoopIcon /></Tool>
          <Tool label="Replay options" $w={30} $tone="faint"><Caret w={10} /></Tool>
          <Tool label="Save" $w={60} $on $tone="dark"><SaveIcon /></Tool>
          <Tool label="New data source" $w={68}><DbPlusIcon /></Tool>
        </ToolGroup>
        <ToolGroup $left={14} $right={10}>
          <Tool label="New worksheet" $w={54} $on $tone="dark"><NewSheetIcon /></Tool>
          <SplitGap />
          <Tool label="New worksheet options" $w={18} $on $tone="dark"><Caret w={10} /></Tool>
          <Tool label="Duplicate" $w={68}><DuplicateIcon /></Tool>
          <Tool label="Clear sheet" $w={52}><ClearIcon /></Tool>
          <Tool label="Clear options" $w={30}><Caret w={10} /></Tool>
        </ToolGroup>
        <ToolGroup $left={10} $right={16}>
          <Tool label="Swap rows and columns" $w={64}><SwapIcon /></Tool>
          <Tool label="Sort ascending" $w={68}><SortAscIcon /></Tool>
          <Tool label="Sort descending" $w={60}><SortDescIcon /></Tool>
        </ToolGroup>
        <ToolGroup $left={20} $right={30}>
          <Tool label="Highlight" $w={50}><PenIcon /></Tool>
          <Tool label="Highlight options" $w={18}><Caret w={10} /></Tool>
          <Tool label="Group members" $w={66} $tone="faint"><ClipIcon /></Tool>
          <Tool label="Group options" $w={12} $tone="faint"><Caret w={10} /></Tool>
          <Tool label="Show mark labels" $w={76}><TextBoxIcon /></Tool>
          <Tool label="Fix axes" $w={50}><PinIcon /></Tool>
          <SelectBox $w="196px" $h={46} $m="6px 0 0 24px">
            <NativeSelect aria-label="Fit" $pad={14} defaultValue="Standard">
              <option>Standard</option>
            </NativeSelect>
            <SelectArrow><Caret w={14} h={9} /></SelectArrow>
          </SelectBox>
        </ToolGroup>
        <ToolGroup $left={14} $right={8}>
          <Tool label="Show cards" $w={60}><CardsIcon /></Tool>
          <Tool label="Card options" $w={12}><Caret w={10} /></Tool>
          <Tool label="Presentation mode" $w={76}><PresentIcon /></Tool>
        </ToolGroup>
        <ShowMe type="button"><ShowMeIcon />Show Me</ShowMe>
      </Toolbar>

      <Workspace>
        <DataPane>
          <PaneTabs>
            <PaneTab type="button" $active>Data</PaneTab>
            <PaneTab type="button">Analytics<ChevronIcon /></PaneTab>
          </PaneTabs>
          <SourceRow type="button"><SourceIcon />2019_08_citibike_data</SourceRow>
          <SearchRow>
            <SearchField>
              <SearchInput type="text" placeholder="Search" aria-label="Search" />
              <SearchIcon />
            </SearchField>
            <PlainIcon type="button" aria-label="Filter fields" $w={43}><FunnelIcon /></PlainIcon>
            <PlainIcon type="button" aria-label="View fields" $w={50} $rule><ListIcon /></PlainIcon>
            <PlainIcon type="button" aria-label="Field options" $w={26}><Caret w={14} h={9} /></PlainIcon>
          </SearchRow>
          <TablesTitle>Tables</TablesTitle>
          <Fields items={DIMENSIONS} />
          <Fields items={MEASURES} />
        </DataPane>

        <CardColumn>
          <Card $min={124}>
            <CardTitle>Pages</CardTitle>
          </Card>
          <Card $min={202}>
            <CardTitle>Filters</CardTitle>
            <PillStack>
              <Pill type="button">HOUR(Tripduration)</Pill>
              <Pill type="button">Gender</Pill>
            </PillStack>
          </Card>
          <Card $min={436}>
            <CardTitle>Marks</CardTitle>
            <SelectBox $h={42} $m="6px 12px 0" $size={20}>
              <SelectIcon><LineIcon /></SelectIcon>
              <NativeSelect aria-label="Mark type" $pad={13} defaultValue="Automatic">
                <option>Automatic</option>
              </NativeSelect>
              <SelectArrow><Caret w={14} h={8} /></SelectArrow>
            </SelectBox>
            <MarkGrid>
              {MARKS.map(([name, icon]) => (
                <MarkButton key={name} type="button"><MarkGlyph>{icon}</MarkGlyph>{name}</MarkButton>
              ))}
            </MarkGrid>
            <MarkRow>
              <ColorIcon />
              <Pill type="button" $green>Gender</Pill>
            </MarkRow>
          </Card>
        </CardColumn>

        <Sheet>
          <Shelf>
            <ShelfName $pad={14}><ColumnsIcon />Columns</ShelfName>
            <ShelfPills>
              <Pill type="button" $w={296}><ExpandIcon />HOUR(Tripduratio..</Pill>
              <Pill type="button" $w={296}><ExpandIcon plus />MINUTE(Tripdurat..</Pill>
            </ShelfPills>
          </Shelf>
          <Shelf>
            <ShelfName $pad={12}><RowsIcon />Rows</ShelfName>
            <ShelfPills>
              <Pill type="button" $w={296} $green>CNT(2019_08_citibik..</Pill>
            </ShelfPills>
          </Shelf>
          <ViewRow>
            <View>
              <ViewTitle>Checkout time by Gender</ViewTitle>
              <Chart>
                <YAxis />
                <Plot />
              </Chart>
              <ScrollTrack><ScrollThumb $share={87.7} /></ScrollTrack>
            </View>
            <FilterColumn>
              <Filter title="HOUR(Tripduration)" items={HOURS} initial={["0", "1", "2"]} selected="0" fill />
              <Filter title="Gender" items={GENDERS} initial={GENDERS} />
            </FilterColumn>
          </ViewRow>
        </Sheet>
      </Workspace>

      <TabStrip>
        <SheetTab type="button" $w={262} $first><TabSourceIcon />Data Source</SheetTab>
        {SHEETS.map(([name, w], i) => (
          <SheetTab key={name} type="button" $w={w} $active={i === 1}>{name}</SheetTab>
        ))}
        <SheetTab type="button" aria-label="New worksheet" $w={63} $icon><TabSheetIcon /></SheetTab>
        <SheetTab type="button" aria-label="New dashboard" $w={64} $icon><TabDashIcon /></SheetTab>
        <SheetTab type="button" aria-label="New story" $w={64} $icon><TabStoryIcon /></SheetTab>
      </TabStrip>
    </Window>
  );
}
